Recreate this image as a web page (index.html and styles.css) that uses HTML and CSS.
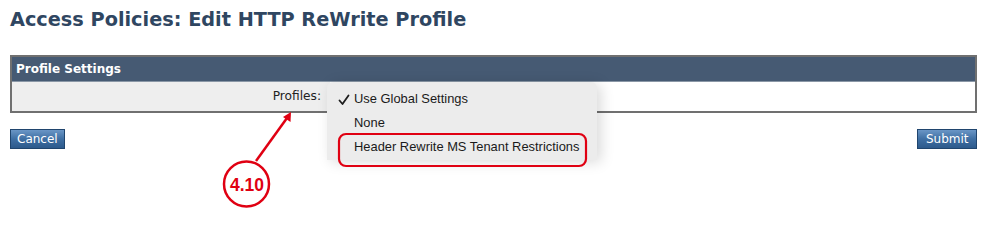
FILE: index.html
```html
<!DOCTYPE html>
<html>
<head>
<meta charset="utf-8">
<link rel="stylesheet" href="styles.css">
</head>
<body>
<div class="page">
  <h1 class="title">Access Policies: Edit HTTP ReWrite Profile</h1>
  <div class="panel">
    <div class="panel-head">Profile Settings</div>
    <div class="panel-row">
      <div class="label-cell">Profiles:</div>
      <div class="value-cell"></div>
    </div>
  </div>
  <div class="actions">
    <button class="btn">Cancel</button>
    <button class="btn btn-wide">Submit</button>
  </div>

  <div class="menu">
    <div class="menu-item"><svg class="check" width="12" height="12" viewBox="0 0 12 12"><path d="M1.5 6.5 L4.5 10 L10.5 1.5" fill="none" stroke="#1e1e1e" stroke-width="1.8" stroke-linecap="round" stroke-linejoin="round"/></svg>Use Global Settings</div>
    <div class="menu-item">None</div>
    <div class="menu-item">Header Rewrite MS Tenant Restrictions</div>
  </div>

  <svg class="annot" width="999" height="223" viewBox="0 0 999 223">
    <rect x="339" y="134" width="247" height="32" rx="7" ry="7" fill="none" stroke="#e00012" stroke-width="2.2"/>
    <line x1="256" y1="161" x2="287" y2="118" stroke="#e00012" stroke-width="2.5"/>
    <polygon points="291,112 290.5,122 283,117" fill="#e00012"/>
    <circle cx="246.5" cy="184" r="22.5" fill="#fff" stroke="#e00012" stroke-width="2.5"/>
    <text x="247" y="190.5" class="annot-text" text-anchor="middle">4.10</text>
  </svg>
</div>
</body>
</html>
```
FILE: styles.css
```css
* { box-sizing: border-box; }
html, body { margin: 0; padding: 0; background: #fff; }
body { font-family: "DejaVu Sans", Verdana, sans-serif; }

.page {
  position: relative;
  width: 999px;
  height: 223px;
  padding: 8px 22px 0 10px;
  overflow: hidden;
}

.title {
  margin: 0;
  font-size: 19.3px;
  line-height: 24px;
  font-weight: bold;
  color: #2f4661;
}

.panel {
  margin-top: 23px;
  border: 2px solid #707070;
}

.panel-head {
  height: 25px;
  background: #465a73;
  color: #fff;
  font-weight: bold;
  font-size: 12px;
  line-height: 25px;
  padding-left: 4px;
  border-bottom: 1px solid #8a97a6;
}

.panel-row {
  display: grid;
  grid-template-columns: 318px 1fr;
  height: 29px;
}

.label-cell {
  background: #eeeeee;
  text-align: right;
  padding-right: 9px;
  font-size: 12.2px;
  line-height: 29px;
  color: #222;
}

.value-cell { background: #fff; }

.actions {
  display: flex;
  justify-content: space-between;
  margin-top: 16px;
}

.btn {
  height: 20px;
  padding: 0 6px;
  font-family: "DejaVu Sans", Verdana, sans-serif;
  font-size: 12px;
  line-height: 18px;
  color: #fff;
  background: linear-gradient(#6a96c6, #3f6fa3 50%, #2d5a8c);
  border: 1px solid #20456e;
  border-radius: 0;
}

.btn-wide { padding: 0 7.5px; }

.menu {
  position: absolute;
  left: 327px;
  top: 82px;
  width: 270px;
  height: 78px;
  background: #ececec;
  border-radius: 6px 6px 0 0;
  box-shadow: 4px 2px 14px rgba(0,0,0,0.15);
  padding-top: 5px;
  font-family: "Liberation Sans", Arial, sans-serif;
  font-size: 12.9px;
  color: #1a1a1a;
}

.menu-item {
  height: 24px;
  line-height: 24px;
  padding-left: 27px;
  position: relative;
}

.check {
  position: absolute;
  left: 11px;
  top: 7px;
}

.annot {
  position: absolute;
  left: 0;
  top: 0;
  pointer-events: none;
}

.annot-text {
  font-family: "Liberation Sans", Arial, sans-serif;
  font-weight: bold;
  font-size: 17.5px;
  fill: #e00012;
}
```
